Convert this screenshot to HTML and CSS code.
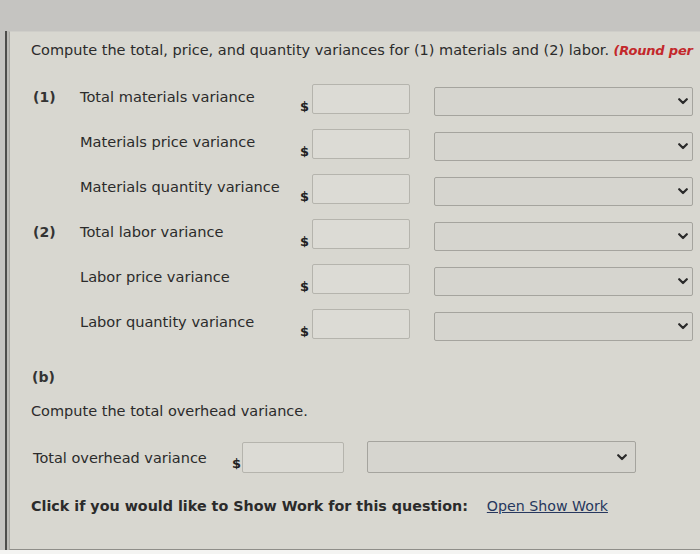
FILE: index.html
```html
<!DOCTYPE html>
<html>
<head>
<meta charset="utf-8">
<link rel="stylesheet" href="styles.css">
</head>
<body>
<div class="shell">
  <div class="rail">
    <div class="panel">
      <p class="intro">Compute the total, price, and quantity variances for (1) materials and (2) labor. <em class="note">(Round per</em></p>

      <div class="rows">
        <div class="row">
          <span class="num">(1)</span>
          <span class="label">Total materials variance</span>
          <span class="dollar">$</span>
          <span class="input"></span>
          <span class="select"><svg class="chev" viewBox="0 0 10 7" width="10" height="7"><polyline points="1.2,1.2 5,5 8.8,1.2"/></svg></span>
        </div>
        <div class="row">
          <span class="num"></span>
          <span class="label">Materials price variance</span>
          <span class="dollar">$</span>
          <span class="input"></span>
          <span class="select"><svg class="chev" viewBox="0 0 10 7" width="10" height="7"><polyline points="1.2,1.2 5,5 8.8,1.2"/></svg></span>
        </div>
        <div class="row">
          <span class="num"></span>
          <span class="label">Materials quantity variance</span>
          <span class="dollar">$</span>
          <span class="input"></span>
          <span class="select"><svg class="chev" viewBox="0 0 10 7" width="10" height="7"><polyline points="1.2,1.2 5,5 8.8,1.2"/></svg></span>
        </div>
        <div class="row">
          <span class="num">(2)</span>
          <span class="label">Total labor variance</span>
          <span class="dollar">$</span>
          <span class="input"></span>
          <span class="select"><svg class="chev" viewBox="0 0 10 7" width="10" height="7"><polyline points="1.2,1.2 5,5 8.8,1.2"/></svg></span>
        </div>
        <div class="row">
          <span class="num"></span>
          <span class="label">Labor price variance</span>
          <span class="dollar">$</span>
          <span class="input"></span>
          <span class="select"><svg class="chev" viewBox="0 0 10 7" width="10" height="7"><polyline points="1.2,1.2 5,5 8.8,1.2"/></svg></span>
        </div>
        <div class="row">
          <span class="num"></span>
          <span class="label">Labor quantity variance</span>
          <span class="dollar">$</span>
          <span class="input"></span>
          <span class="select"><svg class="chev" viewBox="0 0 10 7" width="10" height="7"><polyline points="1.2,1.2 5,5 8.8,1.2"/></svg></span>
        </div>
      </div>

      <p class="part">(b)</p>
      <p class="question">Compute the total overhead variance.</p>

      <div class="orow">
        <span class="olabel">Total overhead variance</span>
        <span class="dollar odollar">$</span>
        <span class="input oinput"></span>
        <span class="select oselect"><svg class="chev" viewBox="0 0 10 7" width="10" height="7"><polyline points="1.2,1.2 5,5 8.8,1.2"/></svg></span>
      </div>

      <p class="work">Click if you would like to Show Work for this question: <a class="link" href="#">Open Show Work</a></p>
    </div>
  </div>
</div>
</body>
</html>
```
FILE: styles.css
```css
html, body {
  margin: 0;
  padding: 0;
}
body {
  background: #c5c4c1;
  font-family: "DejaVu Sans", Verdana, sans-serif;
  color: #2b2b2b;
  width: 700px;
  height: 554px;
  overflow: hidden;
}
.shell {
  margin-top: 31px;
  padding-left: 5px;
  height: 519px;
  border-bottom: 4px solid #f4f4f2;
}
.rail {
  height: 100%;
  border-left: 2px solid #4d4d4b;
  padding-left: 2px;
  background: #bcbbb7;
}
.panel {
  height: 100%;
  box-sizing: border-box;
  background: #d8d7d0;
  border-left: 1px solid #a9a8a3;
  border-top: 1px solid #cfcec9;
  border-bottom: 1px solid #8f8e89;
  padding: 9px 0 0 21px;
  overflow: hidden;
}
p { margin: 0; }
.intro {
  font-size: 14.5px;
  line-height: 18px;
  height: 18px;
  white-space: nowrap;
}
.note {
  color: #c3282b;
  font-weight: bold;
  font-style: italic;
  font-size: 13px;
  letter-spacing: -0.2px;
}
.rows {
  margin-top: 25px;
}
.row {
  display: flex;
  height: 45px;
  align-items: flex-start;
}
.num {
  width: 49px;
  padding-left: 2px;
  box-sizing: border-box;
  font-weight: bold;
  font-size: 14px;
  line-height: 16px;
  padding-top: 5px;
  color: #333;
}
.label {
  width: 220px;
  font-size: 14.6px;
  line-height: 16px;
  padding-top: 5px;
  white-space: nowrap;
}
.dollar {
  width: 12px;
  font-weight: bold;
  font-size: 13px;
  line-height: 14px;
  padding-top: 16px;
  color: #222;
}
.input {
  width: 98px;
  height: 30px;
  box-sizing: border-box;
  border: 1px solid #b5b4ad;
  border-radius: 2px;
  background: #dcdbd5;
}
.select {
  margin-left: 24px;
  margin-top: 3px;
  width: 259px;
  height: 29px;
  box-sizing: border-box;
  border: 1px solid #a5a49e;
  border-radius: 2px;
  background: #d6d5cf;
  display: flex;
  align-items: center;
  justify-content: flex-end;
  padding-right: 4px;
}
.chev {
  fill: none;
  stroke: #2a2a2a;
  stroke-width: 2.2;
  stroke-linecap: round;
  stroke-linejoin: round;
}
.part {
  margin-top: 14px;
  font-weight: bold;
  font-size: 14px;
  line-height: 18px;
  padding-left: 1px;
  color: #333;
}
.question {
  margin-top: 16px;
  font-size: 14.5px;
  line-height: 18px;
}
.orow {
  display: flex;
  align-items: flex-start;
  margin-top: 21px;
  height: 32px;
}
.olabel {
  width: 199px;
  padding-left: 2px;
  font-size: 14.5px;
  line-height: 16px;
  padding-top: 9px;
  white-space: nowrap;
}
.odollar {
  width: 10px;
}
.oinput {
  margin-top: 1px;
  width: 102px;
  height: 31px;
}
.oselect {
  margin-left: 23px;
  margin-top: 0;
  width: 269px;
  height: 32px;
  padding-right: 8px;
}
.work {
  margin-top: 24px;
  font-weight: bold;
  font-size: 14.3px;
  line-height: 18px;
  white-space: nowrap;
}
.link {
  margin-left: 14px;
  font-weight: normal;
  font-size: 14.2px;
  color: #27375e;
  text-decoration: underline;
}
```
